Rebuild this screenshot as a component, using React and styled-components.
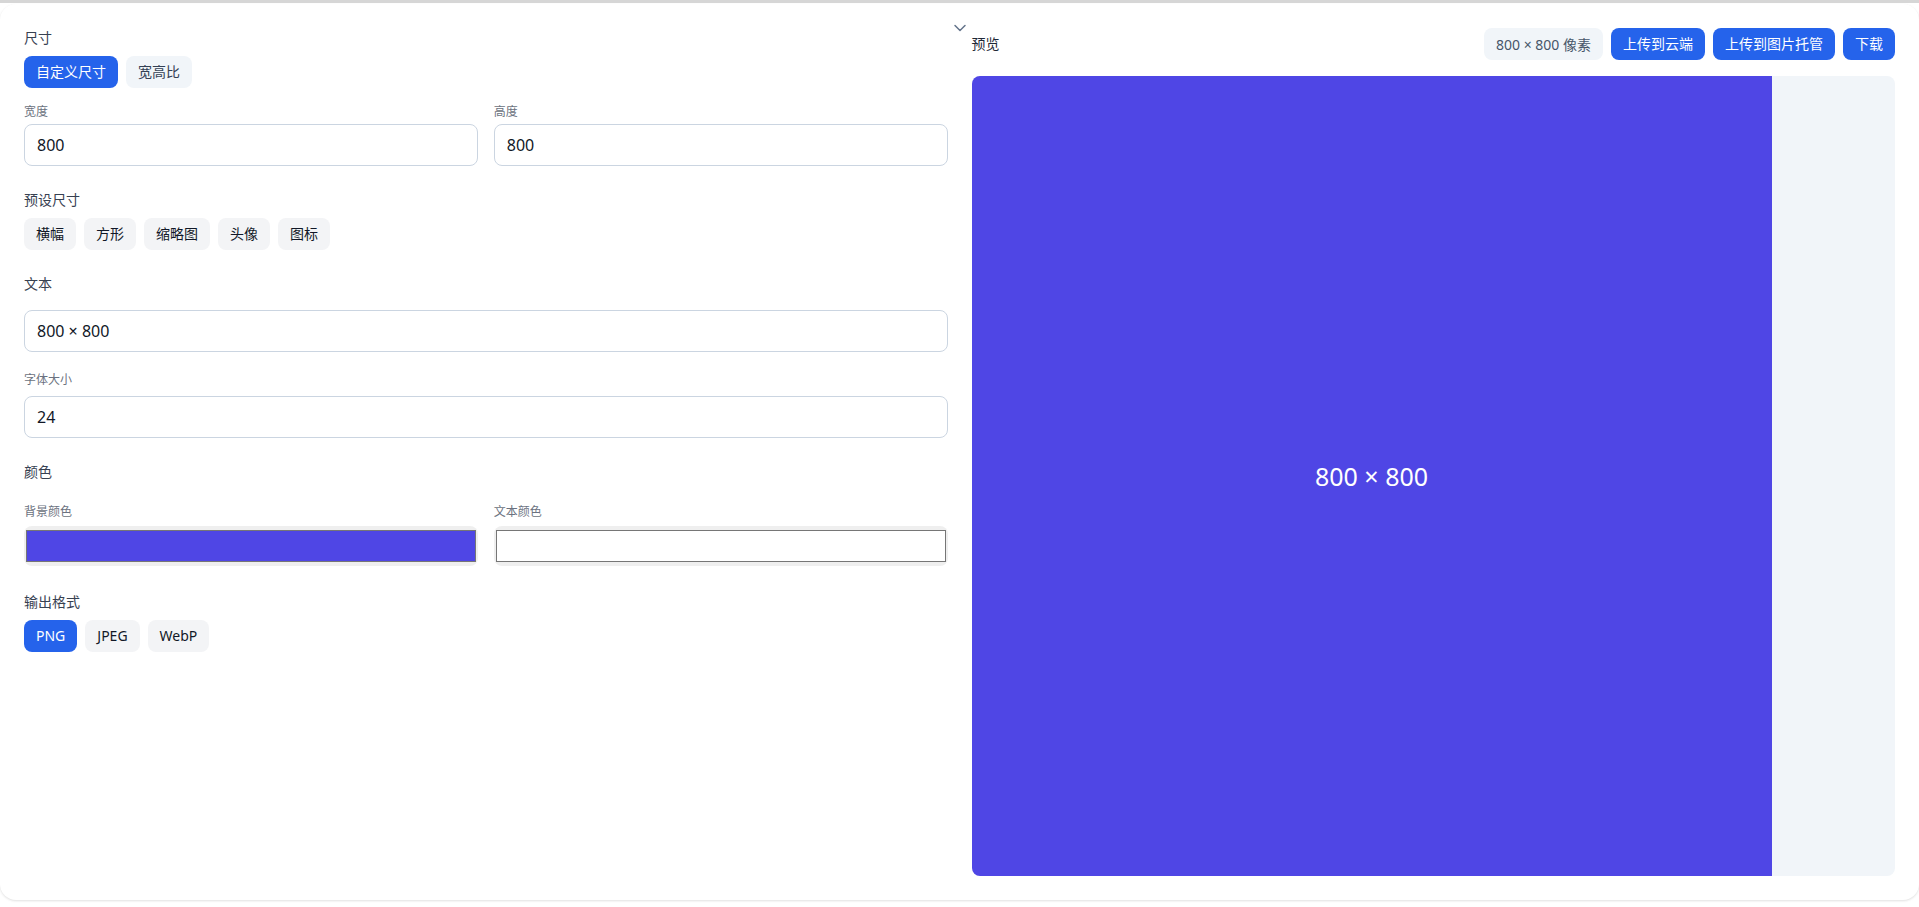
import React, { useState } from "react";
import styled, { createGlobalStyle, css } from "styled-components";
import { ChevronDown } from "lucide-react";

const GlobalStyle = createGlobalStyle`
  html, body {
    margin: 0;
    padding: 0;
    background: #ffffff;
    font-family: "Noto Sans", "Noto Sans CJK SC", sans-serif;
    -webkit-font-smoothing: antialiased;
  }
  * { box-sizing: border-box; }
`;

const TopEdge = styled.div`
  height: 3px;
  background: #d6d6d6;
`;

const Card = styled.div`
  position: relative;
  margin: 1px 0 7px 0;
  background: #ffffff;
  border-radius: 16px;
  box-shadow: 0 1px 3px rgba(0, 0, 0, 0.08), 0 1px 2px rgba(0, 0, 0, 0.05);
  padding: 24px;
  display: grid;
  grid-template-columns: 1fr 1fr;
  column-gap: 24px;
  align-items: start;
`;

const Collapse = styled.span`
  position: absolute;
  top: 14px;
  left: 950px;
  display: flex;
  color: #64748b;
`;

const Column = styled.div`
  display: flex;
  flex-direction: column;
  min-width: 0;
`;

const Section = styled.div`
  display: flex;
  flex-direction: column;
  margin-top: ${(p) => p.$mt || 0}px;
`;

const Title = styled.div`
  font-size: 14px;
  line-height: 20px;
  color: #374151;
  margin-bottom: ${(p) => (p.$mb === undefined ? 8 : p.$mb)}px;
`;

const SubLabel = styled.label`
  display: block;
  font-size: 12px;
  line-height: 16px;
  color: #6b7280;
  margin-bottom: ${(p) => (p.$mb === undefined ? 4 : p.$mb)}px;
`;

const FieldGrid = styled.div`
  display: grid;
  grid-template-columns: 1fr 1fr;
  column-gap: 16px;
  margin-top: ${(p) => p.$mt || 0}px;
`;

const Field = styled.div`
  display: flex;
  flex-direction: column;
  margin-top: ${(p) => p.$mt || 0}px;
`;

const TextInput = styled.input`
  height: 42px;
  width: 100%;
  border: 1px solid #cbd5e1;
  border-radius: 8px;
  padding: 0 12px;
  font-family: "Noto Sans", "Noto Sans CJK SC", sans-serif;
  font-size: 16px;
  color: #111827;
  background: #ffffff;
  outline: none;
`;

const ColorInput = styled.input`
  width: 100%;
  height: 40px;
  border: 0;
  border-radius: 8px;
  padding: 0;
  background: #efefef;
  cursor: pointer;
  &::-webkit-color-swatch-wrapper {
    padding: 4px 2px 4px 2px;
  }
  &::-webkit-color-swatch {
    border: 1px solid #767676;
    border-radius: 0;
  }
`;

const ButtonRow = styled.div`
  display: flex;
  flex-wrap: wrap;
  gap: 8px;
`;

const variants = {
  primary: css`
    background: #2563eb;
    color: #ffffff;
  `,
  soft: css`
    background: #f1f5f9;
    color: #334155;
  `,
  plain: css`
    background: #f3f4f6;
    color: #111827;
  `,
};

const Button = styled.button`
  height: 32px;
  padding: 0 12px;
  border: 0;
  border-radius: 8px;
  font-family: "Noto Sans", "Noto Sans CJK SC", sans-serif;
  font-size: 14px;
  line-height: 20px;
  cursor: pointer;
  white-space: nowrap;
  ${(p) => variants[p.$variant || "plain"]}
`;

const Header = styled.div`
  display: flex;
  align-items: center;
  justify-content: space-between;
  height: 32px;
  margin-bottom: 16px;
`;

const HeaderTitle = styled.div`
  font-size: 14px;
  line-height: 20px;
  color: #1f2937;
`;

const Badge = styled.span`
  display: inline-flex;
  align-items: center;
  height: 32px;
  padding: 0 12px;
  border-radius: 8px;
  background: #f1f5f9;
  color: #475569;
  font-size: 14px;
`;

const PreviewFrame = styled.div`
  height: 800px;
  border-radius: 8px;
  overflow: hidden;
  background: #f1f5f9;
  display: flex;
`;

const CanvasBox = styled.div`
  width: 800px;
  height: 800px;
  flex: none;
  display: flex;
  align-items: center;
  justify-content: center;
  font-size: 25px;
  color: ${(p) => p.$fg};
  background: ${(p) => p.$bg};
`;

export default function App() {
  const [mode, setMode] = useState("custom");
  const [format, setFormat] = useState("PNG");
  const [w, setW] = useState("800");
  const [h, setH] = useState("800");
  const [text, setText] = useState("800 × 800");
  const [size, setSize] = useState("24");
  const [bg, setBg] = useState("#4f46e5");
  const [fg, setFg] = useState("#ffffff");

  return (
    <>
      <GlobalStyle />
      <TopEdge />
      <Card>
        <Collapse>
          <ChevronDown size={20} strokeWidth={1.8} />
        </Collapse>
        <Column>
          <Section>
            <Title>尺寸</Title>
            <ButtonRow>
              <Button $variant={mode === "custom" ? "primary" : "soft"} onClick={() => setMode("custom")}>
                自定义尺寸
              </Button>
              <Button $variant={mode === "ratio" ? "primary" : "soft"} onClick={() => setMode("ratio")}>
                宽高比
              </Button>
            </ButtonRow>
          </Section>

          <FieldGrid $mt={16}>
            <Field>
              <SubLabel>宽度</SubLabel>
              <TextInput value={w} onChange={(e) => setW(e.target.value)} />
            </Field>
            <Field>
              <SubLabel>高度</SubLabel>
              <TextInput value={h} onChange={(e) => setH(e.target.value)} />
            </Field>
          </FieldGrid>

          <Section $mt={24}>
            <Title>预设尺寸</Title>
            <ButtonRow>
              {["横幅", "方形", "缩略图", "头像", "图标"].map((p) => (
                <Button key={p} $variant="plain">
                  {p}
                </Button>
              ))}
            </ButtonRow>
          </Section>

          <Section $mt={24}>
            <Title $mb={16}>文本</Title>
            <TextInput value={text} onChange={(e) => setText(e.target.value)} />
          </Section>

          <Field $mt={20}>
            <SubLabel $mb={8}>字体大小</SubLabel>
            <TextInput value={size} onChange={(e) => setSize(e.target.value)} />
          </Field>

          <Section $mt={24}>
            <Title $mb={0}>颜色</Title>
            <FieldGrid $mt={22}>
              <Field>
                <SubLabel $mb={6}>背景颜色</SubLabel>
                <ColorInput type="color" value={bg} onChange={(e) => setBg(e.target.value)} />
              </Field>
              <Field>
                <SubLabel $mb={6}>文本颜色</SubLabel>
                <ColorInput type="color" value={fg} onChange={(e) => setFg(e.target.value)} />
              </Field>
            </FieldGrid>
          </Section>

          <Section $mt={26}>
            <Title>输出格式</Title>
            <ButtonRow>
              {["PNG", "JPEG", "WebP"].map((f) => (
                <Button key={f} $variant={format === f ? "primary" : "plain"} onClick={() => setFormat(f)}>
                  {f}
                </Button>
              ))}
            </ButtonRow>
          </Section>
        </Column>

        <Column>
          <Header>
            <HeaderTitle>预览</HeaderTitle>
            <ButtonRow>
              <Badge>
                {w} × {h} 像素
              </Badge>
              <Button $variant="primary">上传到云端</Button>
              <Button $variant="primary">上传到图片托管</Button>
              <Button $variant="primary">下载</Button>
            </ButtonRow>
          </Header>
          <PreviewFrame>
            <CanvasBox $bg={bg} $fg={fg}>
              {text}
            </CanvasBox>
          </PreviewFrame>
        </Column>
      </Card>
    </>
  );
}
